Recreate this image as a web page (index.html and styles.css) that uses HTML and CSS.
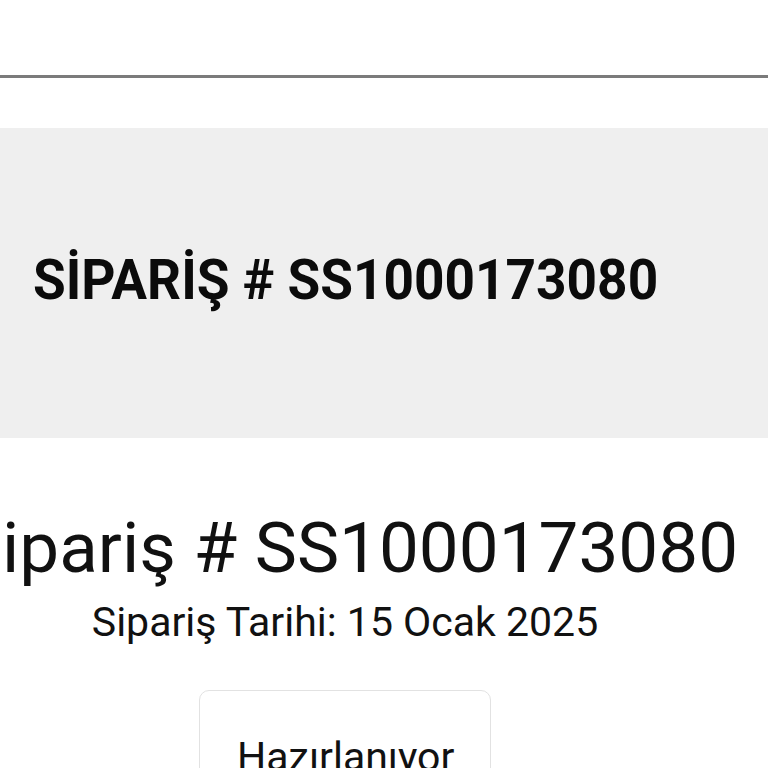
FILE: index.html
```html
<!DOCTYPE html>
<html lang="tr">
<head>
<meta charset="utf-8">
<title>Sipariş</title>
<link rel="stylesheet" href="styles.css">
</head>
<body>
<header class="topbar"></header>
<section class="banner">
  <h1 class="banner-title">SİPARİŞ # SS1000173080</h1>
</section>
<main class="order">
  <h2 class="order-title">Sipariş # SS1000173080</h2>
  <p class="order-date">Sipariş Tarihi: 15 Ocak 2025</p>
  <div class="status">Hazırlanıyor</div>
</main>
</body>
</html>
```
FILE: styles.css
```css
html, body {
  margin: 0;
  padding: 0;
  background: #ffffff;
  overflow: hidden;
}
body {
  font-family: Roboto, "Noto Sans", sans-serif;
  color: #111111;
}
.topbar {
  height: 75px;
  border-bottom: 3px solid #7b7b7b;
  background: #ffffff;
}
.banner {
  margin-top: 50px;
  background: #efefef;
  padding: 119px 0 125px 33px;
}
.banner-title {
  margin: 0;
  font-size: 56px;
  line-height: 66px;
  font-weight: 700;
  white-space: nowrap;
  color: #0b0b0b;
  transform: scaleX(0.95);
  transform-origin: left center;
}
.order {
  width: 690px;
  display: flex;
  flex-direction: column;
  align-items: center;
}
.order-title {
  margin: 69px 0 0 8px;
  font-size: 71px;
  line-height: 82px;
  font-weight: 400;
  white-space: nowrap;
}
.order-date {
  margin: 9px 0 0;
  font-size: 41px;
  line-height: 48px;
  white-space: nowrap;
}
.status {
  margin-top: 44px;
  width: 292px;
  box-sizing: border-box;
  border: 1px solid #e2e2e2;
  border-radius: 10px;
  padding: 42px 0 40px 37px;
  font-size: 41px;
  line-height: 48px;
  white-space: nowrap;
}
```
